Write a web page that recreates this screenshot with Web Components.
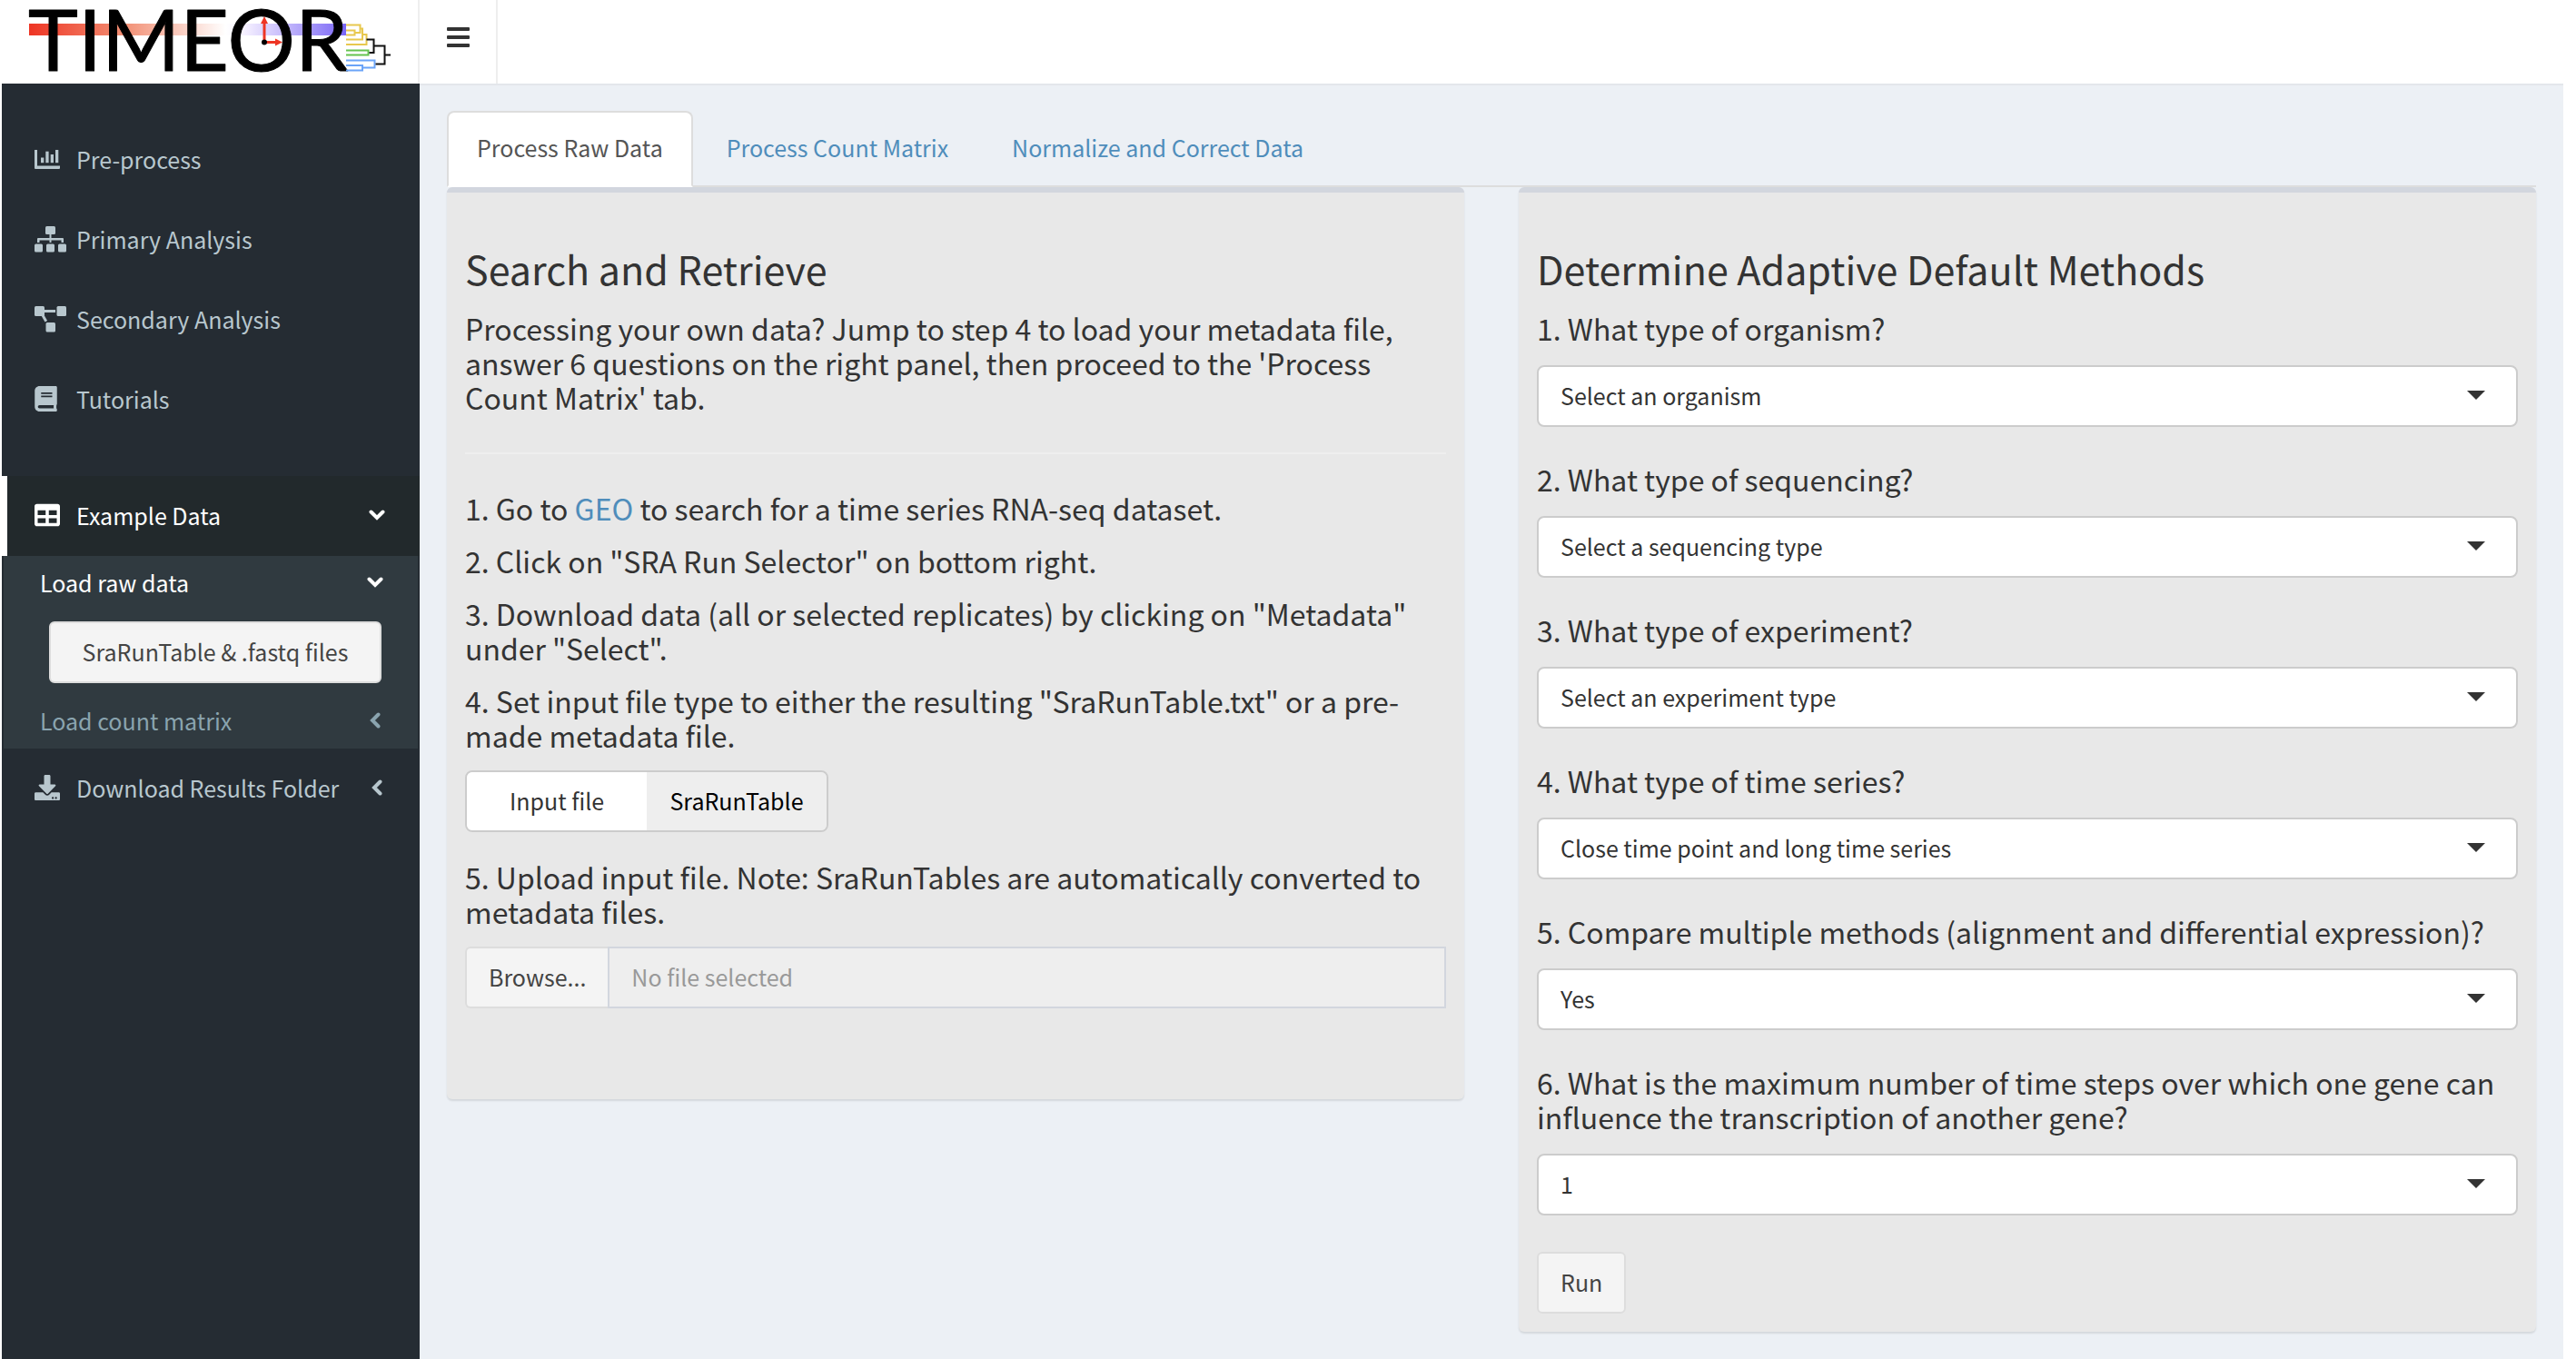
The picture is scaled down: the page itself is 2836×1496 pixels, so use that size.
<!DOCTYPE html>
<html lang="en">
<head>
<meta charset="utf-8">
<title>TIMEOR</title>
<style>
html { background: #fff; }
body {
  margin: 0;
  font: 25px/40px "Noto Sans CJK SC", "Noto Sans", sans-serif;
  color: #333;
  --dark: #252c33;
  --link: #4f8dbb;
}
</style>
</head>
<body>
<timeor-app></timeor-app>

<template id="timeor-app">
  <style>
    :host { display: flex; flex-direction: column; min-height: 100vh; box-sizing: border-box; padding: 0 14px 0 2px; }
    header { display: flex; height: 92px; background: #fff; }
    .brand { display: flex; width: 458px; border-right: 2px solid #eee; }
    .toggle { display: grid; place-items: center; width: 86px; padding: 0 0 10px 2px; background: none; border: 0; border-right: 2px solid #eee; cursor: pointer; box-sizing: border-box; }
    .body { display: flex; flex: 1; }
    aside { width: 460px; flex: none; background: var(--dark); padding: 40px 0; box-sizing: border-box; }
    nav { display: block; }
    .primary { margin-bottom: 40px; }
    .sub { background: #303a40; margin: 0 2px; }
    .load { padding: 12px 40px 12px 50px; }
    .load app-button { display: block; --width: 100%; }
    main { flex: 1; min-width: 0; background: #ecf0f5; border-top: 2px solid #e3e6eb; padding: 28px 30px 30px; box-sizing: border-box; }
    .cols { display: flex; gap: 60px; align-items: flex-start; }
    info-panel { flex: 1; min-width: 0; }
    p { font-size: 32px; line-height: 38px; margin: 0 0 20px; }
    hr { border: 0; border-top: 2px solid #eee; margin: 42px 0 40px; }
    a { color: var(--link); text-decoration: none; }
    input-switch { margin-bottom: 30px; }
    .upload { margin-bottom: 80px; }
  </style>
  <header>
    <div class="brand"><timeor-logo></timeor-logo></div>
    <button class="toggle" aria-label="Toggle navigation">
      <svg width="26" height="22" viewBox="0 0 26 22" fill="#333"><rect y="0" width="25" height="4" rx="1"/><rect y="9" width="25" height="4" rx="1"/><rect y="18" width="25" height="4" rx="1"/></svg>
    </button>
  </header>
  <div class="body">
    <aside>
      <nav class="primary">
        <nav-item icon="chart">Pre-process</nav-item>
        <nav-item icon="sitemap">Primary Analysis</nav-item>
        <nav-item icon="diagram">Secondary Analysis</nav-item>
        <nav-item icon="book">Tutorials</nav-item>
      </nav>
      <nav>
        <nav-item icon="table" arrow="down" active>Example Data</nav-item>
        <div class="sub">
          <nav-item sub arrow="down" active>Load raw data</nav-item>
          <div class="load"><app-button>SraRunTable &amp; .fastq files</app-button></div>
          <nav-item sub arrow="left">Load count matrix</nav-item>
        </div>
        <nav-item icon="download" arrow="left">Download Results Folder</nav-item>
      </nav>
    </aside>
    <main>
      <tab-strip tabs="Process Raw Data|Process Count Matrix|Normalize and Correct Data"></tab-strip>
      <div class="cols">
        <info-panel heading="Search and Retrieve">
          <p>Processing your own data? Jump to step 4 to load your metadata file, answer 6 questions on the right panel, then proceed to the 'Process Count Matrix' tab.</p>
          <hr>
          <p>1. Go to <a href="#geo">GEO</a> to search for a time series RNA-seq dataset.</p>
          <p>2. Click on "SRA Run Selector" on bottom right.</p>
          <p>3. Download data (all or selected replicates) by clicking on "Metadata" under "Select".</p>
          <p>4. Set input file type to either the resulting "SraRunTable.txt" or a pre-made metadata file.</p>
          <input-switch></input-switch>
          <p>5. Upload input file. Note: SraRunTables are automatically converted to metadata files.</p>
          <file-field class="upload"></file-field>
        </info-panel>
        <info-panel heading="Determine Adaptive Default Methods">
          <select-field label="1. What type of organism?" value="Select an organism"></select-field>
          <select-field label="2. What type of sequencing?" value="Select a sequencing type"></select-field>
          <select-field label="3. What type of experiment?" value="Select an experiment type"></select-field>
          <select-field label="4. What type of time series?" value="Close time point and long time series"></select-field>
          <select-field label="5. Compare multiple methods (alignment and differential expression)?" value="Yes"></select-field>
          <select-field label="6. What is the maximum number of time steps over which one gene can influence the transcription of another gene?" value="1"></select-field>
          <app-button>Run</app-button>
        </info-panel>
      </div>
    </main>
  </div>
</template>

<template id="timeor-logo">
  <style>:host { display: block; } svg { display: block; overflow: visible; } text { font-family: Lato, sans-serif; font-size: 93px; }</style>
  <svg width="440" height="92" viewBox="2 0 440 92" fill="none" role="img" aria-label="TIMEOR">
    <defs><linearGradient id="g"><stop offset="0" stop-color="#ee3524"/><stop offset=".3" stop-color="#f28f74"/><stop offset=".62" stop-color="#fff"/><stop offset=".68" stop-color="#f5f0ff"/><stop offset="1" stop-color="#7a66f6"/></linearGradient></defs>
    <rect x="32" y="26" width="349" height="13" fill="url(#g)"/>
    <text x="31" y="78" fill="#000" stroke="#000" stroke-width="1" stroke-linejoin="round">TIMEOR</text>
    <g stroke="#ee3524" stroke-width="3"><path d="M291 46V25M291 46.500H304"/></g>
    <path fill="#ee3524" d="M291 18l4 8h-8zM311 46.500l-8-4v8z"/>
    <circle cx="291" cy="46.500" r="3" fill="#000"/>
    <g stroke-width="2">
      <path stroke="#e8c84e" d="M381 27.500H396.500V36H390.500M381 33.500H390.500V38.500H381M396.500 31.500H399V43.500H381M399 38H403.500V49H381"/>
      <path stroke="#65c34f" d="M381 55.500H405.500V60.500H381"/>
      <path stroke="#6ba4f8" d="M381 66.500H412.500V74.500H399M381 72H399V77.500H381"/>
      <path stroke="#111" d="M403.500 43.500H411.500V58H406.500M411.500 50.500H423.500V70.500H413.500M423.500 60.500H430"/>
    </g>
  </svg>
</template>

<template id="nav-item">
  <style>
    :host { display: block; color: #b8c7ce; }
    a { display: flex; align-items: center; height: 88px; box-sizing: border-box; padding: 0 38px 2px 30px; border-left: 6px solid transparent; color: inherit; text-decoration: none; white-space: nowrap; }
    .icon { display: flex; width: 46px; flex: none; }
    .arrow { display: grid; place-items: center; width: 18px; margin-left: auto; }
    svg { display: block; fill: currentColor; }
    :host([active]) { color: #fff; }
    :host([active]) a { background: #22292c; border-color: #fff; }
    :host([sub]) a { height: 60px; padding-left: 40px; border: 0; background: none; }
    :host([sub]) .icon { display: none; }
    :host([sub]:not([active])) { color: #8aa4af; }
  </style>
  <a href="#"><span class="icon"></span><slot></slot><span class="arrow"></span></a>
</template>

<template id="app-button">
  <style>
    :host { display: block; }
    button { display: block; width: var(--width, auto); height: 68px; box-sizing: border-box; padding: 0 24px 2px; font: inherit; color: #444; background: #f4f4f4; border: 2px solid #ddd; border-radius: 6px; white-space: nowrap; cursor: pointer; }
  </style>
  <button type="button"><slot></slot></button>
</template>

<template id="tab-strip">
  <style>
    :host { display: block; border-bottom: 2px solid #ddd; }
    div { display: flex; gap: 4px; margin-bottom: -2px; }
    a { box-sizing: border-box; height: 84px; padding: 18px 31px; border: 2px solid transparent; border-radius: 8px 8px 0 0; color: var(--link); text-decoration: none; }
    a[aria-selected=true] { color: #555; background: #fff; border-color: #ddd #ddd #fff; }
  </style>
  <div role="tablist"></div>
</template>

<template id="info-panel">
  <style>
    :host { display: block; box-sizing: border-box; background: #e8e8e8; border-top: 6px solid #d2d6de; border-radius: 6px; padding: 60px 20px 20px; box-shadow: 0 2px 2px rgba(0,0,0,.1); }
    h3 { margin: 0 0 24px; font-size: 43px; line-height: 46px; font-weight: 400; }
  </style>
  <h3></h3><slot></slot>
</template>

<template id="input-switch">
  <style>
    :host { display: flex; width: 400px; height: 68px; box-sizing: border-box; border: 2px solid #ccc; border-radius: 8px; overflow: hidden; }
    button { flex: 1; padding: 0 0 2px; border: 0; font: inherit; color: #333; background: #fff; cursor: pointer; }
    button[aria-pressed=true] { background: #eee; color: #000; }
  </style>
  <button type="button" aria-pressed="false">Input file</button><button type="button" aria-pressed="true">SraRunTable</button>
</template>

<template id="file-field">
  <style>
    :host { display: flex; height: 68px; }
    label, .name { box-sizing: border-box; height: 68px; border: 2px solid #ddd; padding: 0 24px 2px; font: inherit; }
    label { display: flex; align-items: center; color: #444; background: #f4f4f4; border-right: 0; border-radius: 6px 0 0 6px; cursor: pointer; }
    label input { display: none; }
    .name { flex: 1; min-width: 0; border-color: #d2d6de; border-radius: 0; background: #eee; }
    .name::placeholder { color: #999; opacity: 1; }
  </style>
  <label>Browse...<input type="file"></label>
  <input class="name" type="text" readonly placeholder="No file selected" aria-label="Chosen file">
</template>

<template id="select-field">
  <style>
    :host { display: block; margin-bottom: 38px; }
    :host(:last-of-type) { margin-bottom: 40px; }
    label { display: block; font-size: 32px; line-height: 38px; margin-bottom: 22px; }
    .box { display: grid; align-items: center; }
    select, svg { grid-area: 1 / 1; }
    select { appearance: none; width: 100%; height: 68px; box-sizing: border-box; padding: 0 70px 2px 24px; margin: 0; font: inherit; color: #333; background: #fff; border: 2px solid #ccc; border-radius: 8px; }
    svg { justify-self: end; margin-right: 36px; margin-bottom: 2px; pointer-events: none; }
  </style>
  <label for="s"></label>
  <div class="box"><select id="s"></select><svg width="20" height="10" viewBox="0 0 20 10" fill="#333"><path d="M0 0h20L10 10z"/></svg></div>
</template>

<script>
const icons = {
  chart: '<svg width="28" height="21" viewBox="0 0 28 21"><path d="M0 0h3v17.500h25V20q0 1-1 1H1q-1 0-1-1z"/><rect x="7" y="8.500" width="3.300" height="5.700"/><rect x="12.300" y="1.700" width="3.300" height="12.500"/><rect x="17.700" y="5" width="3.300" height="9.200"/><rect x="23" width="3.300" height="14.200"/></svg>',
  sitemap: '<svg width="35" height="29" viewBox="0 0 35 29"><rect x="12" width="11" height="9" rx="1.500"/><path d="M16.500 8h2v5H31q1 0 1 1v4h-2.500v-2.500h-11V18h-2v-2.500h-11V18H3v-4q0-1 1-1h12.500z"/><rect y="19.500" width="9" height="9" rx="1.500"/><rect x="13" y="19.500" width="9" height="9" rx="1.500"/><rect x="26" y="19.500" width="9" height="9" rx="1.500"/></svg>',
  diagram: '<svg width="35" height="29" viewBox="0 0 35 29"><rect width="11" height="11" rx="1.500"/><rect x="24.500" width="10.500" height="11" rx="1.500"/><rect x="12.500" y="18" width="10.500" height="10.500" rx="1.500"/><path d="M10 4h13v3H10zM7.500 10.500l2.600-1.500 4 7-2.600 1.500z"/></svg>',
  book: '<svg width="25" height="28" viewBox="0 0 448 512"><path d="M448 360V24c0-13.300-10.700-24-24-24H96C43 0 0 43 0 96v320c0 53 43 96 96 96h328c13.300 0 24-10.700 24-24v-16c0-7.500-3.500-14.300-8.900-18.700-4.200-15.400-4.200-59.300 0-74.700 5.400-4.300 8.900-11.100 8.900-18.600zM128 134c0-3.300 2.700-6 6-6h212c3.300 0 6 2.700 6 6v20c0 3.300-2.700 6-6 6H134c-3.300 0-6-2.700-6-6v-20zm0 64c0-3.300 2.700-6 6-6h212c3.300 0 6 2.700 6 6v20c0 3.300-2.700 6-6 6H134c-3.300 0-6-2.700-6-6v-20zm253.400 250H96c-17.700 0-32-14.300-32-32 0-17.600 14.400-32 32-32h285.400c-1.900 17.100-1.900 46.900 0 64z"/></svg>',
  table: '<svg width="28" height="28" viewBox="0 0 512 512"><path d="M464 32H48C21.500 32 0 53.500 0 80v352c0 26.500 21.500 48 48 48h416c26.500 0 48-21.500 48-48V80c0-26.500-21.500-48-48-48zM224 416H64v-96h160v96zm0-160H64v-96h160v96zm224 160H288v-96h160v96zm0-160H288v-96h160v96z"/></svg>',
  download: '<svg width="28" height="28" viewBox="0 0 512 512"><path d="M216 0h80c13.300 0 24 10.700 24 24v168h87.700c17.800 0 26.700 21.500 14.100 34.100L269.700 378.300c-7.500 7.500-19.800 7.500-27.300 0L90.100 226.100c-12.600-12.600-3.700-34.100 14.100-34.100H192V24c0-13.300 10.700-24 24-24zm296 376v112c0 13.300-10.700 24-24 24H24c-13.300 0-24-10.700-24-24V376c0-13.300 10.700-24 24-24h146.700l49 49c20.100 20.100 52.500 20.100 72.600 0l49-49H488c13.300 0 24 10.700 24 24zm-124 88c0-11-9-20-20-20s-20 9-20 20 9 20 20 20 20-9 20-20zm64 0c0-11-9-20-20-20s-20 9-20 20 9 20 20 20 20-9 20-20z"/></svg>',
  down: '<svg width="18" height="12" viewBox="0 0 18 12"><path d="M2.500 2.500L9 9l6.500-6.500" fill="none" stroke="currentColor" stroke-width="4" stroke-linecap="round"/></svg>',
  left: '<svg width="12" height="18" viewBox="0 0 12 18"><path d="M9.500 2.500L3 9l6.500 6.500" fill="none" stroke="currentColor" stroke-width="4" stroke-linecap="round"/></svg>'
};

class Base extends HTMLElement {
  connectedCallback() {
    if (this.shadowRoot) return;
    this.attachShadow({ mode: 'open' }).append(document.getElementById(this.localName).content.cloneNode(true));
    this.fill(this.shadowRoot);
  }
  fill() {}
}

customElements.define('timeor-logo', class extends Base {});
customElements.define('app-button', class extends Base {});
customElements.define('input-switch', class extends Base {
  fill(root) {
    const buttons = [...root.querySelectorAll('button')];
    for (const b of buttons) b.onclick = () => buttons.forEach(o => o.setAttribute('aria-pressed', o === b));
  }
});
customElements.define('file-field', class extends Base {
  fill(root) {
    const file = root.querySelector('[type=file]');
    file.onchange = () => { root.querySelector('.name').value = file.files.length ? file.files[0].name : ''; };
  }
});
customElements.define('nav-item', class extends Base {
  fill(root) {
    root.querySelector('.icon').innerHTML = icons[this.getAttribute('icon')] || '';
    root.querySelector('.arrow').innerHTML = icons[this.getAttribute('arrow')] || '';
  }
});
customElements.define('tab-strip', class extends Base {
  fill(root) {
    const list = root.querySelector('div');
    this.getAttribute('tabs').split('|').forEach((name, i) => {
      const a = document.createElement('a');
      a.href = '#tab' + (i + 1);
      a.setAttribute('role', 'tab');
      a.setAttribute('aria-selected', i === 0);
      a.textContent = name;
      list.append(a);
    });
  }
});
customElements.define('info-panel', class extends Base {
  fill(root) { root.querySelector('h3').textContent = this.getAttribute('heading'); }
});
customElements.define('select-field', class extends Base {
  fill(root) {
    root.querySelector('label').textContent = this.getAttribute('label');
    root.querySelector('select').add(new Option(this.getAttribute('value')));
  }
});
customElements.define('timeor-app', class extends Base {});
</script>
</body>
</html>
